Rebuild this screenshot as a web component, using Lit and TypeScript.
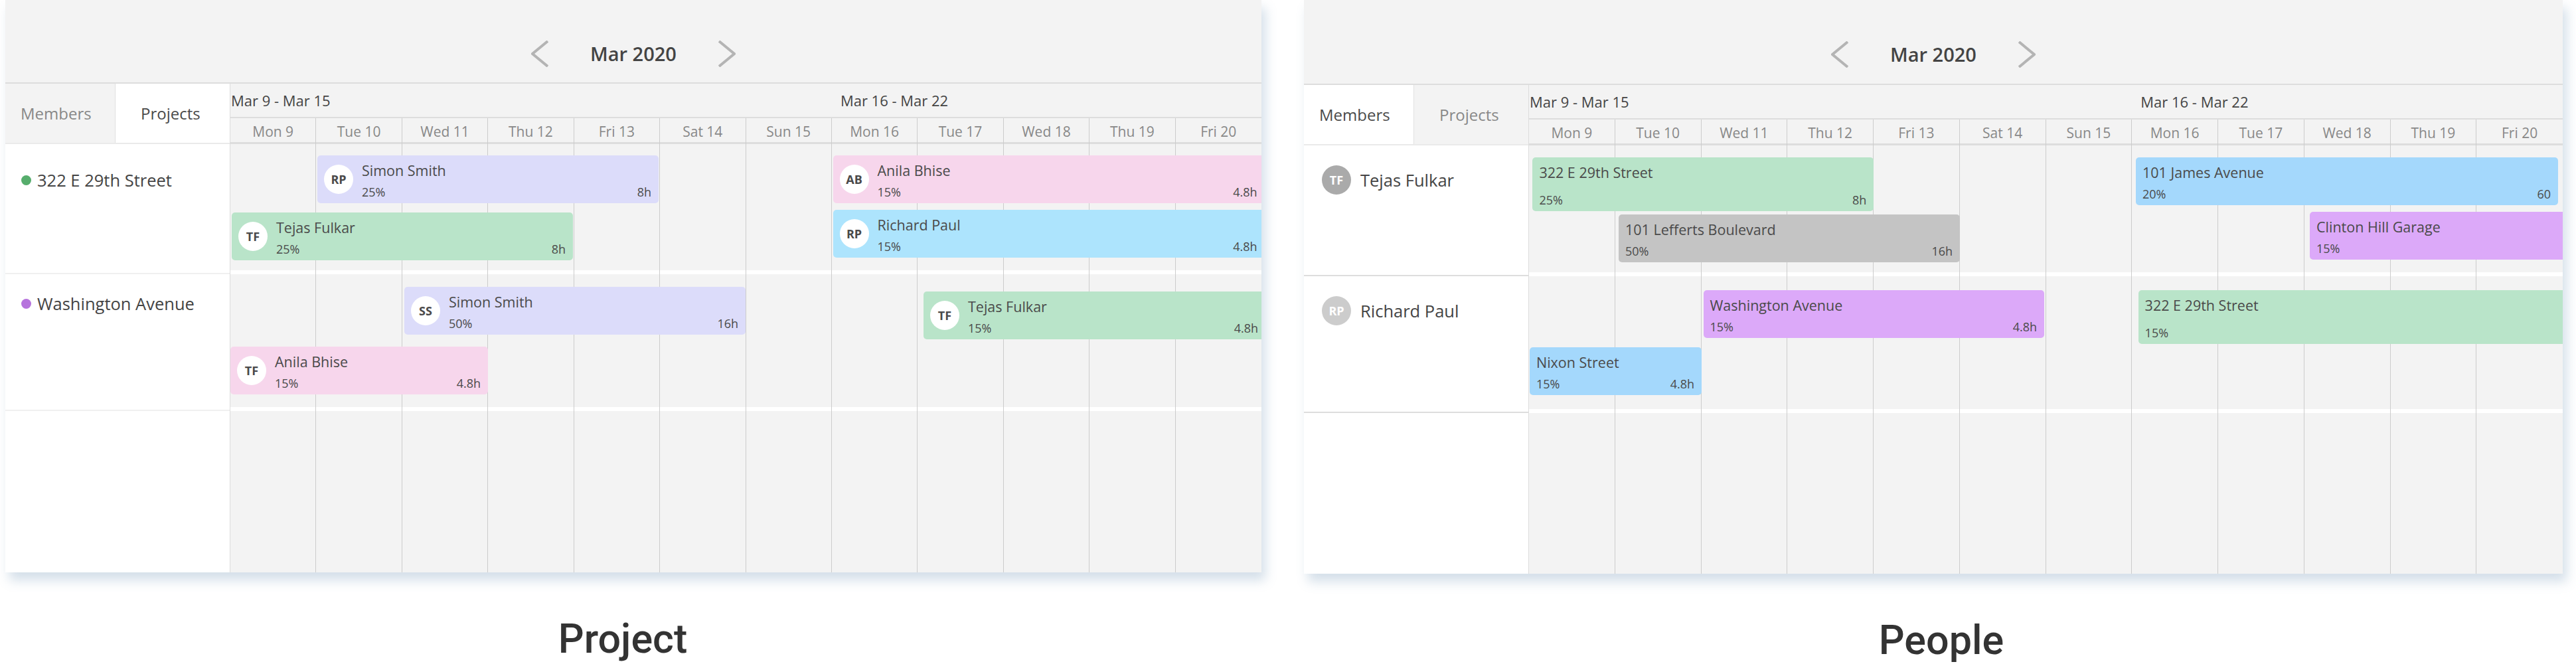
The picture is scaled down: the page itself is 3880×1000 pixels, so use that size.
import { LitElement, html, css, nothing } from 'lit';
import { customElement } from 'lit/decorators.js';

interface Bar {
  name: string;
  pct: string;
  hours?: string;
  initials?: string;
  color: string;
  left: number;
  top: number;
  width: number;
  height?: number;
}

interface Row {
  label: string;
  labelTop: number;
  dot?: string;
  avatar?: { text: string; color: string };
  height: number;
  bars: Bar[];
}

const DAYS = ['Mon 9', 'Tue 10', 'Wed 11', 'Thu 12', 'Fri 13', 'Sat 14', 'Sun 15', 'Mon 16', 'Tue 17', 'Wed 18', 'Thu 19', 'Fri 20'];

const LAVENDER = '#dcdcfa';
const GREEN = '#b9e4c9';
const PINK = '#f7d6ec';
const SKY = '#ade4fd';
const BLUE = '#a4d8fc';
const GREY = '#c4c4c4';
const PURPLE = '#dca9f9';

const PROJECT_ROWS: Row[] = [
  {
    label: '322 E 29th Street',
    labelTop: 40,
    dot: '#56ad6c',
    height: 196,
    bars: [
      { name: 'Simon Smith', initials: 'RP', pct: '25%', hours: '8h', color: LAVENDER, left: 131, top: 17, width: 514 },
      { name: 'Tejas Fulkar', initials: 'TF', pct: '25%', hours: '8h', color: GREEN, left: 2, top: 103, width: 514 },
      { name: 'Anila Bhise', initials: 'AB', pct: '15%', hours: '4.8h', color: PINK, left: 907.5, top: 17, width: 650 },
      { name: 'Richard Paul', initials: 'RP', pct: '15%', hours: '4.8h', color: SKY, left: 907.5, top: 99, width: 650 },
    ],
  },
  {
    label: 'Washington Avenue',
    labelTop: 30,
    dot: '#b673dd',
    height: 206,
    bars: [
      { name: 'Simon Smith', initials: 'SS', pct: '50%', hours: '16h', color: LAVENDER, left: 262, top: 19, width: 514 },
      { name: 'Tejas Fulkar', initials: 'TF', pct: '15%', hours: '4.8h', color: GREEN, left: 1044, top: 26, width: 515 },
      { name: 'Anila Bhise', initials: 'TF', pct: '15%', hours: '4.8h', color: PINK, left: 0, top: 109, width: 388 },
    ],
  },
];

const PEOPLE_ROWS: Row[] = [
  {
    label: 'Tejas Fulkar',
    labelTop: 30,
    avatar: { text: 'TF', color: '#aaaaaa' },
    height: 197,
    bars: [
      { name: '322 E 29th Street', pct: '25%', hours: '8h', color: GREEN, left: 5.4, top: 18, width: 514, height: 81 },
      { name: '101 Lefferts Boulevard', pct: '50%', hours: '16h', color: GREY, left: 135, top: 104, width: 514 },
      { name: '101 James Avenue', pct: '20%', hours: '60', color: BLUE, left: 914, top: 18, width: 636 },
      { name: 'Clinton Hill Garage', pct: '15%', color: PURPLE, left: 1176, top: 100, width: 385 },
    ],
  },
  {
    label: 'Richard Paul',
    labelTop: 30,
    avatar: { text: 'RP', color: '#cccccc' },
    height: 206,
    bars: [
      { name: 'Washington Avenue', pct: '15%', hours: '4.8h', color: PURPLE, left: 262.5, top: 21, width: 513.5 },
      { name: '322 E 29th Street', pct: '15%', color: GREEN, left: 917.6, top: 21, width: 644, height: 81 },
      { name: 'Nixon Street', pct: '15%', hours: '4.8h', color: BLUE, left: 1, top: 107, width: 259 },
    ],
  },
];

@customElement('app-root')
export class AppRoot extends LitElement {
  static styles = css`
    :host {
      display: block;
      width: 3880px;
      height: 1000px;
      background: #fff;
      font-family: 'Open Sans', sans-serif;
      color: #444;
    }

    .page {
      display: flex;
      gap: 64px;
      padding-left: 8px;
    }

    .view-project {
      width: 1892px;
    }

    .view-people {
      width: 1896px;
    }

    .panel {
      background: #f3f3f3;
      box-shadow: 6px 12px 16px rgba(90, 130, 170, 0.26);
    }

    .nav {
      height: 126px;
      box-sizing: border-box;
      border-bottom: 2px solid #ddd;
      display: flex;
      justify-content: center;
      align-items: center;
      gap: 62px;
      padding-top: 38px;
    }

    .view-people .nav {
      height: 128px;
    }

    .nav svg {
      width: 26px;
      height: 40px;
      display: block;
      fill: none;
      stroke: #b4b4b4;
      stroke-width: 4;
    }

    .month {
      font-size: 29px;
      font-weight: 600;
      line-height: 40px;
      width: 132px;
      text-align: center;
      white-space: nowrap;
    }

    .head,
    .body {
      display: flex;
    }

    .tabs {
      width: 338px;
      height: 91px;
      flex: none;
      box-sizing: border-box;
      display: flex;
      border-bottom: 2px solid #eaeaea;
    }

    .tab {
      font-size: 24px;
      font-weight: 500;
      line-height: 89px;
      color: #888;
      white-space: nowrap;
    }

    .tab:first-child {
      width: 166px;
      padding-left: 23px;
      box-sizing: border-box;
      border-right: 1px solid #e0e0e0;
    }

    .tab:last-child {
      flex: 1;
      padding-left: 38px;
    }

    .tab.active {
      background: #fff;
      color: #4a4a4a;
    }

    .calendar {
      flex: 1;
      min-width: 0;
      border-left: 1px solid #ddd;
    }

    .weeks {
      height: 52px;
      box-sizing: border-box;
      border-bottom: 2px solid #ddd;
      display: grid;
      grid-template-columns: 7fr 5fr;
      font-size: 22px;
      font-weight: 500;
      line-height: 50px;
      white-space: nowrap;
    }

    .weeks span:first-child {
      padding-left: 1px;
    }

    .weeks span:last-child {
      padding-left: 13px;
    }

    .days {
      height: 39px;
      box-sizing: border-box;
      border-bottom: 3px solid #ddd;
      display: grid;
      grid-template-columns: repeat(12, 1fr);
    }

    .day {
      font-size: 21px;
      line-height: 40px;
      color: #888;
      text-align: center;
      border-right: 1px solid #ccc;
    }

    .day:last-child {
      border-right: none;
    }

    .side {
      width: 338px;
      flex: none;
      background: #fff;
      height: 645px;
    }

    .side-row {
      box-sizing: border-box;
      border-bottom: 2px solid #f0f0f0;
      display: flex;
      align-items: flex-start;
      font-size: 25.5px;
      font-weight: 500;
      line-height: 28px;
      white-space: nowrap;
    }

    .view-people .side-row {
      border-bottom-color: #ddd;
    }

    .dot {
      width: 15px;
      height: 15px;
      border-radius: 50%;
      margin: 7px 9px 0 24px;
    }

    .side-avatar {
      width: 44px;
      height: 44px;
      border-radius: 50%;
      margin: 0 14px 0 27px;
      color: #fff;
      font-size: 18px;
      font-weight: 700;
      line-height: 44px;
      text-align: center;
    }

    .side-name {
      line-height: 44px;
    }

    .timeline {
      flex: 1;
      min-width: 0;
      height: 645px;
      position: relative;
      overflow: hidden;
      border-left: 1px solid #ddd;
    }

    .track {
      position: relative;
      box-sizing: border-box;
      border-bottom: 6px solid #fff;
    }

    .lines {
      position: absolute;
      inset: 0;
      display: grid;
      grid-template-columns: repeat(12, 1fr);
    }

    .lines i {
      border-right: 1px solid #ccc;
    }

    .lines i:last-child {
      border-right: none;
    }

    .bar {
      position: absolute;
      z-index: 1;
      box-sizing: border-box;
      border-radius: 5px;
      padding: 10px 11px 5px 10px;
      display: flex;
      gap: 13px;
      color: #4a4a4a;
    }

    .bar-avatar {
      width: 44px;
      height: 44px;
      flex: none;
      margin-top: 4px;
      border-radius: 50%;
      background: #fff;
      font-size: 18px;
      font-weight: 700;
      line-height: 44px;
      text-align: center;
    }

    .bar-text {
      flex: 1;
      min-width: 0;
      display: flex;
      flex-direction: column;
      justify-content: space-between;
    }

    .bar-name {
      font-size: 21.5px;
      font-weight: 500;
      line-height: 26px;
      white-space: nowrap;
    }

    .bar-meta {
      display: flex;
      justify-content: space-between;
      font-size: 18px;
      line-height: 24px;
    }

    .caption {
      font-family: Roboto, sans-serif;
      font-size: 61px;
      font-weight: 500;
      line-height: 68px;
      color: #333;
      text-align: center;
      margin-top: 66px;
    }

    .view-project .caption {
      padding-right: 32px;
    }

    .view-people .caption {
      padding-left: 24px;
    }
  `;

  renderBar(b: Bar) {
    const box = `left:${b.left}px;top:${b.top}px;width:${b.width}px;height:${b.height ?? 72}px;background:${b.color}`;
    return html`
      <div class="bar" style=${box}>
        ${b.initials ? html`<div class="bar-avatar">${b.initials}</div>` : nothing}
        <div class="bar-text">
          <div class="bar-name">${b.name}</div>
          <div class="bar-meta"><span>${b.pct}</span><span>${b.hours ?? ''}</span></div>
        </div>
      </div>
    `;
  }

  renderSideRow(r: Row) {
    return html`
      <div class="side-row" style="height:${r.height}px;padding-top:${r.labelTop}px">
        ${r.dot
          ? html`<span class="dot" style="background:${r.dot}"></span><span>${r.label}</span>`
          : html`<span class="side-avatar" style="background:${r.avatar?.color}">${r.avatar?.text}</span><span class="side-name">${r.label}</span>`}
      </div>
    `;
  }

  renderView(kind: string, caption: string, activeTab: number, rows: Row[]) {
    return html`
      <section class="view-${kind}">
        <div class="panel">
          <div class="nav">
            <svg viewBox="0 0 26 40"><path d="M25 1 2 20l23 19" /></svg>
            <div class="month">Mar 2020</div>
            <svg viewBox="0 0 26 40"><path d="M1 1l23 19L1 39" /></svg>
          </div>
          <div class="head">
            <div class="tabs">
              <div class="tab ${activeTab === 0 ? 'active' : ''}">Members</div>
              <div class="tab ${activeTab === 1 ? 'active' : ''}">Projects</div>
            </div>
            <div class="calendar">
              <div class="weeks"><span>Mar 9 - Mar 15</span><span>Mar 16 - Mar 22</span></div>
              <div class="days">${DAYS.map((d) => html`<div class="day">${d}</div>`)}</div>
            </div>
          </div>
          <div class="body">
            <div class="side">${rows.map((r) => this.renderSideRow(r))}</div>
            <div class="timeline">
              ${rows.map(
                (r) => html`<div class="track" style="height:${r.height}px">${r.bars.map((b) => this.renderBar(b))}</div>`,
              )}
              <div class="lines">${DAYS.map(() => html`<i></i>`)}</div>
            </div>
          </div>
        </div>
        <div class="caption">${caption}</div>
      </section>
    `;
  }

  render() {
    return html`
      <div class="page">
        ${this.renderView('project', 'Project', 1, PROJECT_ROWS)}
        ${this.renderView('people', 'People', 0, PEOPLE_ROWS)}
      </div>
    `;
  }
}
